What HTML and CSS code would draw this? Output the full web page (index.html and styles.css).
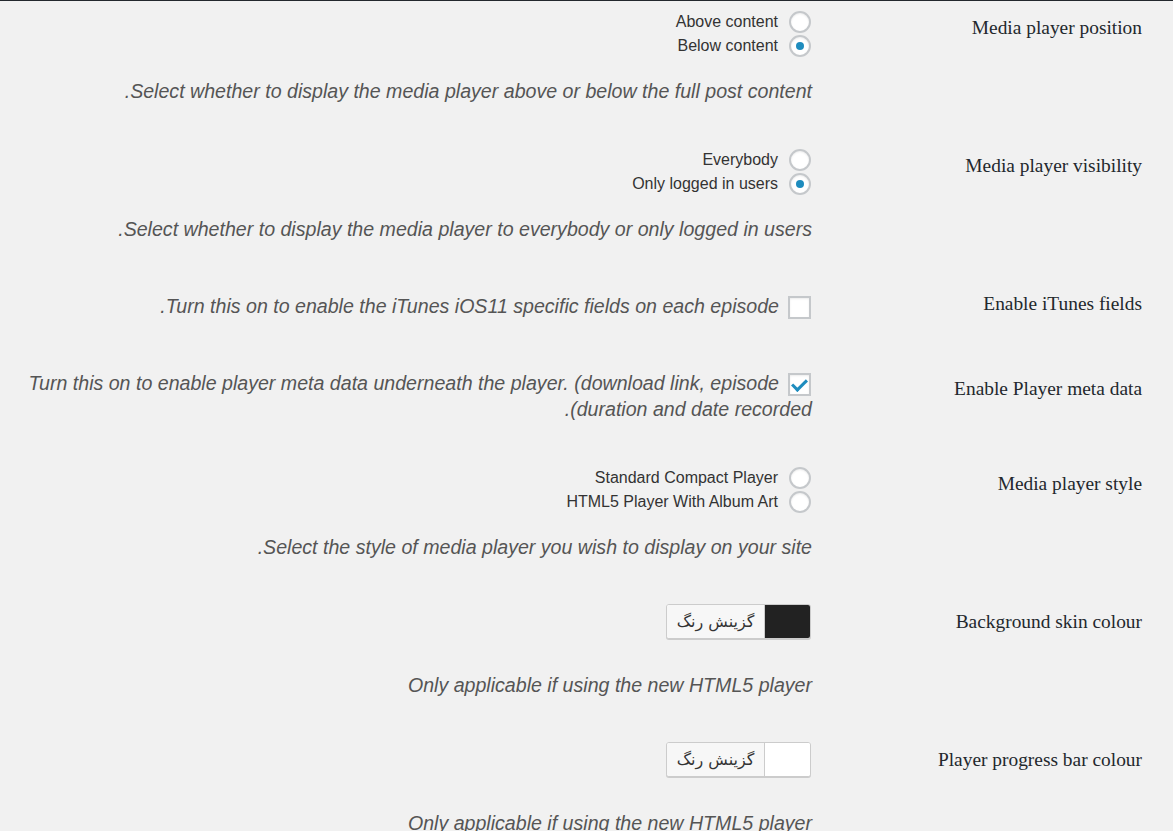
FILE: index.html
```html
<!DOCTYPE html>
<html lang="fa" dir="rtl">
<head>
  <meta charset="UTF-8">
  <meta name="viewport" content="width=device-width, initial-scale=1.0">
  <title>Player settings</title>
  <link rel="stylesheet" href="styles.css">
</head>
<body>
  <div class="wrap">
    <div class="row">
      <div class="row-label">Media player position</div>
      <div class="row-field">
        <label class="option"><input type="radio" class="radio" name="player_position">Above content</label>
        <label class="option"><input type="radio" class="radio" name="player_position" checked>Below content</label>
        <p class="description">Select whether to display the media player above or below the full post content.</p>
      </div>
    </div>

    <div class="row">
      <div class="row-label">Media player visibility</div>
      <div class="row-field">
        <label class="option"><input type="radio" class="radio" name="player_visibility">Everybody</label>
        <label class="option"><input type="radio" class="radio" name="player_visibility" checked>Only logged in users</label>
        <p class="description">Select whether to display the media player to everybody or only logged in users.</p>
      </div>
    </div>

    <div class="row">
      <div class="row-label">Enable iTunes fields</div>
      <div class="row-field">
        <label class="check"><input type="checkbox" class="checkbox"><span class="description-inline">Turn this on to enable the iTunes iOS11 specific fields on each episode.</span></label>
      </div>
    </div>

    <div class="row">
      <div class="row-label row-label-low">Enable Player meta data</div>
      <div class="row-field">
        <label class="check"><input type="checkbox" class="checkbox" checked><span class="description-inline">Turn this on to enable player meta data underneath the player. (download link, episode duration and date recorded<span class="bidi-tail">).</span></span></label>
      </div>
    </div>

    <div class="row">
      <div class="row-label">Media player style</div>
      <div class="row-field">
        <label class="option"><input type="radio" class="radio" name="player_style">Standard Compact Player</label>
        <label class="option"><input type="radio" class="radio" name="player_style">HTML5 Player With Album Art</label>
        <p class="description">Select the style of media player you wish to display on your site.</p>
      </div>
    </div>

    <div class="row">
      <div class="row-label">Background skin colour</div>
      <div class="row-field">
        <button type="button" class="color-btn"><span class="swatch swatch-dark"></span><span class="color-text">گزینش رنگ</span></button>
        <p class="description">Only applicable if using the new HTML5 player</p>
      </div>
    </div>

    <div class="row">
      <div class="row-label">Player progress bar colour</div>
      <div class="row-field">
        <button type="button" class="color-btn"><span class="swatch swatch-light"></span><span class="color-text">گزینش رنگ</span></button>
        <p class="description">Only applicable if using the new HTML5 player</p>
      </div>
    </div>
  </div>
</body>
</html>
```

FILE: styles.css
```css
body {
  margin: 0;
  background: #f1f1f1;
  color: #333;
  font-family: "Liberation Sans", Arial, sans-serif;
}
.wrap {
  border-top: 1px solid #23282d;
  padding-right: 31px;
}
.row {
  display: flex;
  padding: 22px 0;
}
.row:first-child {
  padding-top: 9px;
}
.row-label {
  flex: none;
  width: 320px;
  padding: 5px 0 0 10px;
  font-family: "Liberation Serif", "Times New Roman", serif;
  font-size: 19.4px;
  line-height: 26px;
  color: #23282d;
}
.row-label-low {
  padding-top: 13px;
}
.row-field {
  flex: 1;
  padding-left: 10px;
}
.option {
  display: flex;
  align-items: center;
  gap: 11px;
  height: 24px;
  padding-right: 1px;
  font-size: 16px;
  color: #333;
}
.radio,
.checkbox {
  appearance: none;
  -webkit-appearance: none;
  margin: 0;
  flex: none;
  display: inline-grid;
  place-content: center;
  background: #fff;
  border: 2px solid #c5c8cb;
  box-shadow: inset 0 1px 2px rgba(0, 0, 0, 0.08);
  cursor: pointer;
}
.radio {
  width: 22px;
  height: 22px;
  border-radius: 50%;
}
.radio:checked::before {
  content: "";
  width: 8px;
  height: 8px;
  border-radius: 50%;
  background: #1e8cbe;
}
.checkbox {
  width: 23px;
  height: 23px;
  margin: -4px 1px -4px 9px;
  vertical-align: middle;
}
.checkbox:checked::before {
  content: "";
  width: 6px;
  height: 12px;
  margin-top: -3px;
  border: solid #1e8cbe;
  border-width: 0 3px 3px 0;
  transform: rotate(45deg);
}
.check {
  display: block;
  padding-top: 7px;
  font-size: 19.6px;
  line-height: 26px;
}
/* keeps the closing bracket out of the bracket pairing, so it sits on the rtl side */
.bidi-tail {
  unicode-bidi: isolate;
}
.description,
.description-inline {
  font-style: italic;
  font-size: 19.6px;
  line-height: 26px;
  color: #555;
}
.description {
  margin: 20px 0 0;
}
.color-btn {
  display: flex;
  height: 35px;
  margin: 0 1px 33px 0;
  padding: 0;
  border: 1px solid #ccc;
  border-radius: 3px;
  box-shadow: 0 1px 0 #ccc;
  background: #fff;
  overflow: hidden;
  cursor: pointer;
}
.swatch {
  width: 45px;
  height: 100%;
}
.swatch-dark {
  background: #222;
}
.swatch-light {
  background: #fff;
}
.color-text {
  width: 97px;
  line-height: 33px;
  border-right: 1px solid #ccc;
  background: #f7f7f7;
  font-family: "DejaVu Sans", sans-serif;
  font-size: 16px;
  color: #333;
  text-align: center;
}
```
